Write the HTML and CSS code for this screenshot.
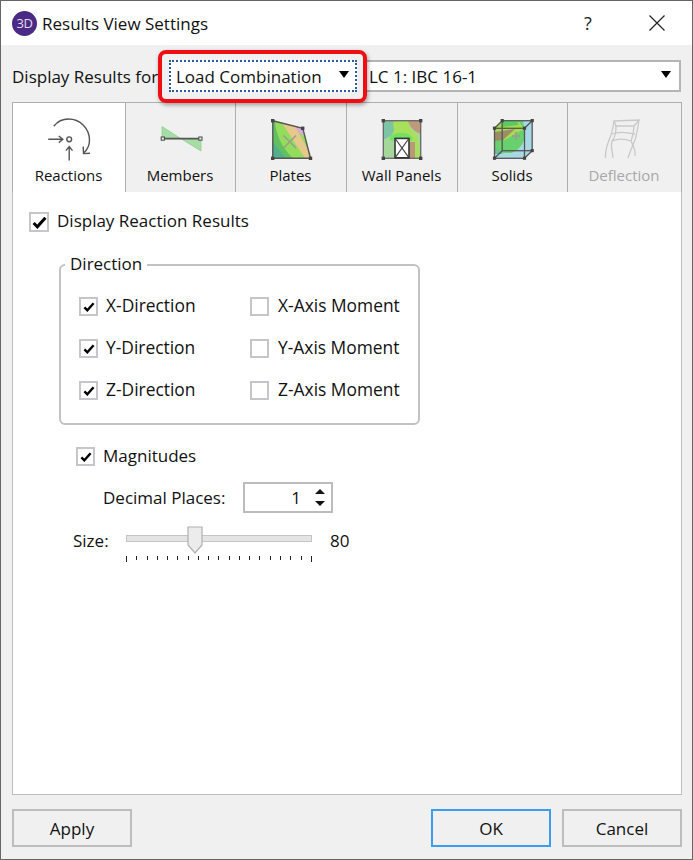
FILE: index.html
```html
<!DOCTYPE html>
<html lang="en">
<head>
<meta charset="utf-8">
<title>Results View Settings</title>
<link rel="stylesheet" href="styles.css">
</head>
<body>
<div class="window">
  <header class="titlebar">
    <div class="app-logo">3D</div>
    <div class="title">Results View Settings</div>
    <div class="help">?</div>
    <svg class="close" width="18" height="18" viewBox="0 0 18 18"><path d="M1.5 1.5L16.5 16.5M16.5 1.5L1.5 16.5" stroke="#222" stroke-width="1.2" fill="none"/></svg>
  </header>
  <main class="content">
    <div class="toprow">
      <span class="toplabel">Display Results for</span>
      <div class="select select-focus"><span>Load Combination</span><i class="caret"></i></div>
      <div class="select select-wide"><span>LC 1: IBC 16-1</span><i class="caret"></i></div>
      <div class="highlight"></div>
    </div>
    <div class="tabs">
      <div class="tab tab-active tab-1">
        <svg class="tab-icon" width="48" height="48" viewBox="0 0 48 48" fill="none" stroke="#555" stroke-width="1.4">
          <circle cx="24.2" cy="23.3" r="2.4"/>
          <path d="M3.2 23.3H17.5M13.8 20L17.8 23.3L13.8 26.6"/>
          <path d="M24.2 44.5V31M20.9 34.6L24.2 30.6L27.5 34.6"/>
          <path d="M8.8 10.2C12.5 5.5 18 3 23.5 3C35 3 44.5 12.5 44.5 24C44.5 29 42.5 33.5 38.8 37"/>
          <path d="M38.2 30.5L38.5 37.6L45 37.2"/>
        </svg>
        <span>Reactions</span>
      </div>
      <div class="tab tab-2">
        <svg class="tab-icon" width="48" height="48" viewBox="0 0 48 48">
          <path d="M5 10.5L24 22.7H5ZM24 22.7H44V35Z" fill="#a6dca6" stroke="#8fd08f" stroke-width="0.8"/>
          <path d="M6 22.7H43" stroke="#555" stroke-width="1.8"/>
          <rect x="4.2" y="21" width="3.2" height="3.2" fill="#eee" stroke="#444" stroke-width="1"/>
          <rect x="41.8" y="21" width="3.2" height="3.2" fill="#eee" stroke="#444" stroke-width="1"/>
        </svg>
        <span>Members</span>
      </div>
      <div class="tab tab-3">
        <svg class="tab-icon" width="48" height="48" viewBox="0 0 48 48">
          <path d="M5.8 4.7L35.8 12.3L43.5 42.3H5.8Z" fill="#93dc5c"/>
          <path d="M21 8.6L35.8 12.3L38 21Z" fill="#dcaade"/>
          <path d="M15 7L28 10.3L43.5 38V42.3H38Z" fill="#e6c88c"/>
          <path d="M5.8 4.7H8C9 18 14 31 26 42.3H5.8Z" fill="#62c060"/>
          <path d="M5.8 26L19 42.3H5.8Z" fill="#52b08c"/>
          <path d="M16.5 19.5L29 32M29 19.5L16.5 32" stroke="#9aa08a" stroke-width="1.6"/>
          <path d="M5.8 4.7L35.8 12.3L43.5 42.3H5.8Z" fill="none" stroke="#555" stroke-width="1.4"/>
          <g fill="#444"><rect x="4" y="3" width="3.4" height="3.4"/><rect x="34" y="10.6" width="3.4" height="3.4"/><rect x="41.8" y="40.6" width="3.4" height="3.4"/><rect x="4" y="40.6" width="3.4" height="3.4"/></g>
        </svg>
        <span>Plates</span>
      </div>
      <div class="tab tab-4">
        <svg class="tab-icon" width="48" height="48" viewBox="0 0 48 48">
          <rect x="5.3" y="4.7" width="37.4" height="37.6" fill="#a5d79b"/>
          <path d="M5.3 4.7H16C17 11 20 14 18 18C13 19 9 22 5.3 24Z" fill="#7cc4a4"/>
          <path d="M16 4.7H31C30 10 34 15 38 18C42 24 40 34 42.7 42.3H32V24H14C12 20 16 16 16 14C16 10 14 9 16 4.7Z" fill="#a8e05c"/>
          <path d="M30 4.7H42.7V18C38 16 32 13 30 4.7Z" fill="#bd9b7a"/>
          <path d="M12 21C18 16 28 15 34 21C36 25 33 25 31 24H17C14 25 11 25 12 21Z" fill="#72e060"/>
          <path d="M31 26H37V42.3H31Z" fill="#b89878"/>
          <rect x="5.3" y="4.7" width="37.4" height="37.6" fill="none" stroke="#666" stroke-width="1.3"/>
          <rect x="17" y="22.4" width="14" height="19.4" fill="#fff" stroke="#333" stroke-width="1.6"/>
          <path d="M17.5 23L30.5 41.2M30.5 23L17.5 41.2" stroke="#444" stroke-width="1.2"/>
          <g fill="#444"><rect x="3.6" y="3" width="3.4" height="3.4"/><rect x="41" y="3" width="3.4" height="3.4"/><rect x="41" y="40.6" width="3.4" height="3.4"/><rect x="3.6" y="40.6" width="3.4" height="3.4"/></g>
        </svg>
        <span>Wall Panels</span>
      </div>
      <div class="tab tab-5">
        <svg class="tab-icon" width="48" height="48" viewBox="0 0 48 48">
          <path d="M5.5 12.3L13.2 4.7H43.2V34.7L35.5 42.3H5.5Z" fill="#a8d8e4"/>
          <path d="M13 5H34L36 15C37 24 32 34 22 37H6V12Z" fill="#68d06c"/>
          <path d="M6 12L14 6H30L35 13L16 24L6 20Z" fill="#a6dc50"/>
          <path d="M6 16L26 13L14 24L6 25Z" fill="#9c8c68"/>
          <path d="M14 6H28L30 9L12 11Z" fill="#58cc60"/>
          <path d="M6 32L14 38H6Z" fill="#66bfa0"/>
          <path d="M23 20H31M27 16V24" stroke="#9aa08a" stroke-width="1.8"/>
          <g fill="none" stroke="#555" stroke-width="1.3">
            <rect x="5.5" y="12.3" width="30" height="30"/>
            <rect x="13.2" y="4.7" width="30" height="30"/>
            <path d="M5.5 12.3L13.2 4.7M35.5 12.3L43.2 4.7M35.5 42.3L43.2 34.7M5.5 42.3L13.2 34.7"/>
          </g>
          <g fill="#444"><rect x="3.9" y="10.6" width="3.2" height="3.2"/><rect x="33.9" y="10.6" width="3.2" height="3.2"/><rect x="11.6" y="3" width="3.2" height="3.2"/><rect x="41.6" y="3" width="3.2" height="3.2"/><rect x="41.6" y="33" width="3.2" height="3.2"/><rect x="33.9" y="40.6" width="3.2" height="3.2"/><rect x="3.9" y="40.6" width="3.2" height="3.2"/></g>
        </svg>
        <span>Solids</span>
      </div>
      <div class="tab tab-6 tab-disabled">
        <svg class="tab-icon" width="48" height="48" viewBox="0 0 48 48" fill="none" stroke="#c9c9c9" stroke-width="1.3">
          <path d="M13 5L38 4L33 10H15Z"/>
          <path d="M13 5C12 12 11 18 8 24C5 32 4 36 4.500 42"/>
          <path d="M15 10C15 16 14 22 11 25C9 32 12 36 12 42"/>
          <path d="M38 4C37 10 36 18 34 24C31 31 29 36 27 42"/>
          <path d="M33 10C33 16 32 20 30 25C33 31 35 36 34 40"/>
          <path d="M11 25C18 22 25 23 30 25M11 18C18 15 25 16 34 18"/>
        </svg>
        <span>Deflection</span>
      </div>
    </div>
    <section class="panel">
      <label class="check check-main"><span class="box box-main"><svg viewBox="0 0 14 12"><path d="M1.500 6.500L5 10L12.500 1.500" fill="none" stroke="#000" stroke-width="2.8"/></svg></span>Display Reaction Results</label>
      <div class="group">
        <div class="legend">Direction</div>
        <div class="group-grid">
          <label class="check check-left"><span class="box"><svg viewBox="0 0 14 12"><path d="M1.500 6.500L5 10L12.500 1.500" fill="none" stroke="#000" stroke-width="2.8"/></svg></span>X-Direction</label>
          <label class="check"><span class="box"></span>X-Axis Moment</label>
          <label class="check check-left"><span class="box"><svg viewBox="0 0 14 12"><path d="M1.500 6.500L5 10L12.500 1.500" fill="none" stroke="#000" stroke-width="2.8"/></svg></span>Y-Direction</label>
          <label class="check"><span class="box"></span>Y-Axis Moment</label>
          <label class="check check-left"><span class="box"><svg viewBox="0 0 14 12"><path d="M1.500 6.500L5 10L12.500 1.500" fill="none" stroke="#000" stroke-width="2.8"/></svg></span>Z-Direction</label>
          <label class="check"><span class="box"></span>Z-Axis Moment</label>
        </div>
      </div>
      <label class="check check-left check-mag"><span class="box"><svg viewBox="0 0 14 12"><path d="M1.500 6.500L5 10L12.500 1.500" fill="none" stroke="#000" stroke-width="2.8"/></svg></span>Magnitudes</label>
      <div class="decimal">
        <span>Decimal Places:</span>
        <div class="spinner"><span class="spin-val">1</span><span class="spin-btns"><i class="up"></i><i class="down"></i></span></div>
      </div>
      <div class="size">
        <span class="size-label">Size:</span>
        <div class="slider">
          <div class="track"></div>
          <svg class="thumb" width="16" height="28" viewBox="0 0 16 28"><path d="M1 1H15V19L8 27L1 19Z" fill="#ececec" stroke="#b0b0b0" stroke-width="1.200"/></svg>
          <div class="ticks"><i></i><i></i><i></i><i></i><i></i><i></i><i></i><i></i><i></i><i></i><i></i><i></i><i></i><i></i><i></i><i></i><i></i><i></i><i></i></div>
        </div>
        <span class="size-val">80</span>
      </div>
    </section>
    <footer class="buttons">
      <div class="btn">Apply</div>
      <div class="btn-right">
        <div class="btn btn-primary">OK</div>
        <div class="btn">Cancel</div>
      </div>
    </footer>
  </main>
</div>
</body>
</html>
```

FILE: styles.css
```css
* { box-sizing: border-box; }
html, body { margin: 0; padding: 0; }
body { width: 693px; height: 860px; font-family: "Open Sans", "Noto Sans", sans-serif; font-size: 17px; color: #111; background: #f0f0f0; overflow: hidden; }
.window { width: 693px; height: 860px; border: 1px solid #666; display: flex; flex-direction: column; background: #f0f0f0; }

.titlebar { height: 44px; background: #fff; display: flex; align-items: center; padding-left: 11px; flex: none; }
.app-logo { width: 25px; height: 25px; border-radius: 50%; background: #4b2a86; color: #e4dcf2; font-size: 13px; display: flex; align-items: center; justify-content: center; letter-spacing: -0.5px; flex: none; }
.title { margin-left: 5px; flex: 1; }
.help { font-size: 18px; color: #222; width: 20px; text-align: center; margin-right: 50px; }
.close { margin-right: 26px; }

.content { flex: 1; display: flex; flex-direction: column; padding: 15px 10px 12px 11px; min-height: 0; }

.toprow { position: relative; display: flex; align-items: center; height: 32px; flex: none; }
.toplabel { width: 157px; flex: none; white-space: nowrap; }
.select { height: 32px; background: #fff; display: flex; align-items: center; justify-content: space-between; padding: 0 7px; }
.select-focus { width: 188px; border: 2px dotted #2a5a9a; padding-left: 5px; padding-right: 6px; }
.select-wide { width: 316px; margin-left: 8px; border: 2px solid #b4b4b4; padding-left: 2px; padding-right: 8px; }
.caret { width: 0; height: 0; border-left: 5px solid transparent; border-right: 5px solid transparent; border-top: 7px solid #000; margin-top: -3px; }
.highlight { position: absolute; left: 146px; top: -10px; width: 209px; height: 53px; border: 4px solid #ee0e14; border-radius: 8px; box-shadow: 1px 2px 4px rgba(0,0,0,0.35); pointer-events: none; }

.tabs { display: flex; margin-top: 10px; height: 90px; flex: none; }
.tab { height: 90px; border: 1px solid #aeaeae; border-left: 0; border-bottom: 0; display: flex; flex-direction: column; align-items: center; padding-top: 13px; background: #f0f0f0; white-space: nowrap; font-size: 15px; flex: none; }
.tab span { line-height: 22px; margin-right: 1px; }
.tab-icon { display: block; flex: none; }
.tab-active { background: #fff; border-left: 1px solid #aeaeae; }
.tab-1 { width: 114px; }
.tab-2 { width: 110px; }
.tab-3 { width: 111px; }
.tab-4 { width: 111px; }
.tab-5 { width: 110px; }
.tab-6 { width: 114px; }
.tab-disabled { color: #a8a8a8; }

.panel { flex: 1; background: #fff; border: 1px solid #bdbdbd; border-top: 0; padding: 20px 0 0 16px; min-height: 0; }
.check { display: flex; align-items: flex-start; height: 19px; line-height: 17px; white-space: nowrap; }
.box { width: 19px; height: 19px; border: 2px solid #c4c6ca; background: #fff; display: flex; align-items: center; justify-content: center; margin-right: 9px; flex: none; }
.box svg { width: 12px; height: 10px; display: block; }
.check-left .box { margin-right: 8px; }
.check-main { height: 20px; line-height: 18px; }
.box-main { width: 20px; height: 20px; margin-right: 8px; }
.box-main svg { width: 15px; height: 13px; }

.group { position: relative; width: 361px; height: 161px; margin: 32px 0 0 30px; border: 2px solid #c2c2c2; border-radius: 6px; padding: 31px 0 0 18px; }
.legend { position: absolute; left: 4px; top: -12px; height: 22px; line-height: 20px; padding: 0 5px; background: #fff; }
.group-grid { display: grid; grid-template-columns: 171px 1fr; row-gap: 23px; font-size: 17.4px; }

.check-mag { margin: 22px 0 0 47px; }
.decimal { display: flex; align-items: center; margin: 16px 0 0 74px; height: 31px; }
.decimal > span:first-child { width: 140px; flex: none; }
.spinner { width: 90px; height: 31px; border: 2px solid #bcbcbc; background: #fff; display: flex; align-items: center; justify-content: flex-end; }
.spin-val { margin-right: 13px; }
.spin-btns { display: flex; flex-direction: column; gap: 7px; width: 12px; margin-right: 5px; align-items: center; }
.spin-btns i { width: 0; height: 0; border-left: 5px solid transparent; border-right: 5px solid transparent; }
.up { border-bottom: 5px solid #111; }
.down { border-top: 5px solid #111; }

.size { display: flex; align-items: flex-start; margin: 13px 0 0 44px; height: 40px; }
.size-label { width: 53px; flex: none; line-height: 30px; }
.slider { position: relative; width: 186px; height: 40px; flex: none; }
.track { position: absolute; left: 0; right: 0; top: 9px; height: 7px; background: #e4e4e4; border: 1px solid #c4c4c4; }
.thumb { position: absolute; left: 61px; top: 0; }
.ticks { position: absolute; left: 0; right: 0; top: 30px; display: flex; justify-content: space-between; align-items: flex-start; height: 7px; }
.ticks i { width: 1px; height: 4px; background: #222; }
.ticks i:first-child, .ticks i:last-child { height: 6px; }
.size-val { margin-left: 18px; line-height: 30px; }

.buttons { display: flex; justify-content: space-between; margin-top: 14px; flex: none; }
.btn-right { display: flex; gap: 11px; }
.btn { width: 120px; height: 38px; border: 2px solid #bdbdbd; background: #f0f0f0; display: flex; align-items: center; justify-content: center; }
.btn-primary { border-color: #3c9cf0; }
```
